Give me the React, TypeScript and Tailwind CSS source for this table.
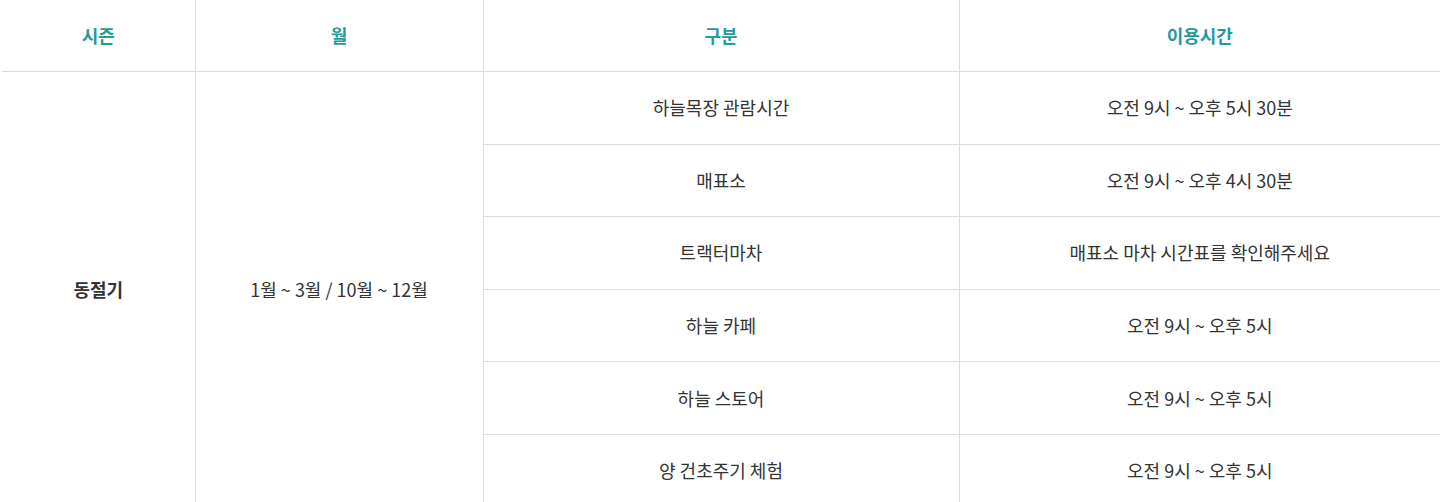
const rows = [
  { name: "하늘목장 관람시간", time: "오전 9시 ~ 오후 5시 30분" },
  { name: "매표소", time: "오전 9시 ~ 오후 4시 30분" },
  { name: "트랙터마차", time: "매표소 마차 시간표를 확인해주세요" },
  { name: "하늘 카페", time: "오전 9시 ~ 오후 5시" },
  { name: "하늘 스토어", time: "오전 9시 ~ 오후 5시" },
  { name: "양 건초주기 체험", time: "오전 9시 ~ 오후 5시" },
];

export default function App() {
  return (
    <div className="h-[502px] w-[1440px] overflow-hidden bg-white pl-[2px] font-['Noto_Sans_CJK_KR','Noto_Sans',sans-serif] text-[18px] text-[#333]">
      <table className="w-full table-fixed border-collapse text-center">
        <colgroup>
          <col className="w-[193px]" />
          <col className="w-[288px]" />
          <col className="w-[476px]" />
          <col className="w-[481px]" />
        </colgroup>
        <thead>
          <tr className="h-[71.5px]">
            <th className="border-r border-b border-[#dddddd] font-bold text-[#26999c]">시즌</th>
            <th className="border-r border-b border-[#dddddd] font-bold text-[#26999c]">월</th>
            <th className="border-r border-b border-[#dddddd] font-bold text-[#26999c]">구분</th>
            <th className="border-b border-[#dddddd] font-bold text-[#26999c]">이용시간</th>
          </tr>
        </thead>
        <tbody>
          {rows.map((r, i) => (
            <tr key={r.name} className="h-[72.6px]">
              {i === 0 && (
                <>
                  <td rowSpan={6} className="border-r border-[#dddddd] font-bold">
                    동절기
                  </td>
                  <td rowSpan={6} className="border-r border-[#dddddd]">
                    1월 ~ 3월 / 10월 ~ 12월
                  </td>
                </>
              )}
              <td className="border-r border-b border-[#dddddd]">{r.name}</td>
              <td className="border-b border-[#dddddd]">{r.time}</td>
            </tr>
          ))}
        </tbody>
      </table>
    </div>
  );
}
